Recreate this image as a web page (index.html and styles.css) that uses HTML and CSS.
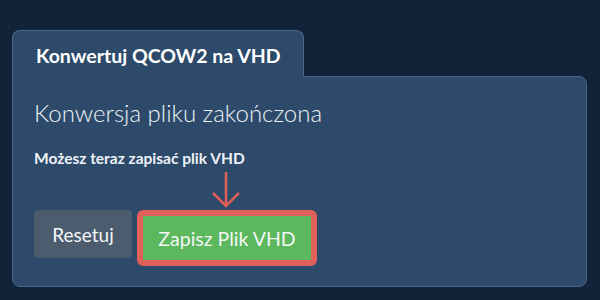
FILE: index.html
```html
<!DOCTYPE html>
<html>
  <head>
    <meta charset="utf-8" />
    <title>Konwerter QCOW2</title>
    <link rel="stylesheet" href="styles.css">
  </head>
  <body>
    <div class="panel">
      <div class="tab">Konwertuj QCOW2 na VHD</div>
      <div class="card">
        <h1>Konwersja pliku zakończona</h1>
        <p class="hint">Możesz teraz zapisać plik VHD</p>
        <div class="actions">
          <button class="btn btn-reset">Resetuj</button>
          <div class="highlight">
            <svg class="arrow" width="30" height="38" viewBox="0 0 30 38">
              <path d="M15 1 V35 M2 22 L15 35 L28 22" fill="none" stroke="#e0605a" stroke-width="2.5" />
            </svg>
            <button class="btn btn-save">Zapisz Plik VHD</button>
          </div>
        </div>
      </div>
    </div>
  </body>
</html>
```

FILE: styles.css
```css
html,
body {
  margin: 0;
  padding: 0;
  width: 100%;
  height: 100%;
}

body {
  background: #112338;
  font-family: Lato, "Open Sans", sans-serif;
  color: #fff;
}

.panel {
  padding: 30px 13px 0 12px;
}

.tab {
  display: inline-block;
  box-sizing: border-box;
  width: 292px;
  height: 47px;
  padding: 13px 0 0 23px;
  background: #2d4a6a;
  border: 1px solid #4d6888;
  border-bottom: none;
  border-radius: 8px 8px 0 0;
  font-weight: bold;
  font-size: 19.5px;
  position: relative;
  z-index: 1;
}

.card {
  box-sizing: border-box;
  height: 211px;
  margin-top: -1px;
  padding: 21px 21px 0 21px;
  background: #2d4a6a;
  border: 1px solid #4d6888;
  border-radius: 0 8px 8px 8px;
}

h1 {
  margin: 0;
  font-weight: 300;
  font-size: 24px;
  color: #eef2f6;
}

.hint {
  margin: 22px 0 0 0;
  font-weight: bold;
  font-size: 15.5px;
  color: #eef2f6;
}

.actions {
  display: flex;
  align-items: flex-start;
  gap: 5px;
  margin-top: 43px;
}

.btn {
  border: none;
  font-family: inherit;
  font-size: 19px;
  color: #f4f6f8;
  padding: 0;
}

.btn-reset {
  width: 98px;
  height: 48px;
  background: #4b5c6f;
  border-radius: 4px;
}

.highlight {
  position: relative;
  border: 6px solid #e0605a;
  border-radius: 6px;
}

.arrow {
  position: absolute;
  left: 68px;
  top: -45px;
}

.btn-save {
  display: block;
  width: 168px;
  height: 44px;
  font-size: 19.5px;
  background: #5cb85c;
}
```
